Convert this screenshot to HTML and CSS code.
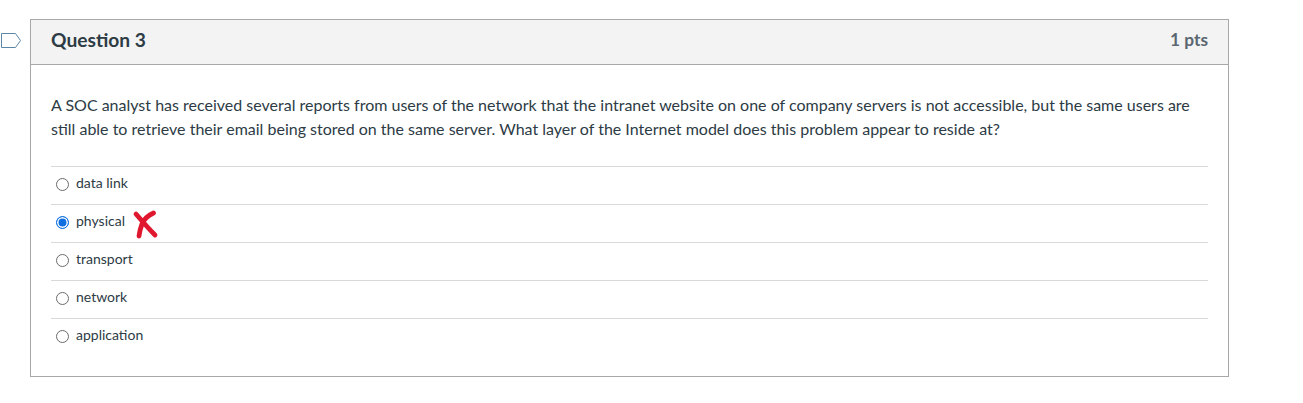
FILE: index.html
```
<!DOCTYPE html>
<html lang="en">
<head>
<meta charset="utf-8">
<title>Question 3</title>
<link rel="stylesheet" href="styles.css">
</head>
<body>
<div class="page">
  <svg class="flag" width="22" height="17" viewBox="0 0 22 17"><path d="M1.5 1.5H15.5L20.5 8.5L15.5 15.5H1.5Z" fill="#fff" stroke="#5b86a6" stroke-width="1"/></svg>
  <section class="card">
    <header class="head">
      <h2 class="title">Question 3</h2>
      <span class="pts">1 pts</span>
    </header>
    <div class="body">
      <p class="text">A SOC analyst has received several reports from users of the network that the intranet website on one of company servers is not accessible, but the same users are still able to retrieve their email being stored on the same server. What layer of the Internet model does this problem appear to reside at?</p>
      <ul class="answers">
        <li class="answer"><span class="radio"></span><span>data link</span></li>
        <li class="answer"><span class="radio checked"></span><span>physical</span>
          <svg class="mark" width="28" height="30" viewBox="0 0 28 30"><path d="M4 5C10 12 17 20 23 26M21.5 4C17 6 12 10 10 15C8.5 19 7.5 23 7 27" fill="none" stroke="#e0182f" stroke-width="4.8" stroke-linecap="round" stroke-linejoin="round"/></svg>
        </li>
        <li class="answer"><span class="radio"></span><span>transport</span></li>
        <li class="answer"><span class="radio"></span><span>network</span></li>
        <li class="answer"><span class="radio"></span><span>application</span></li>
      </ul>
    </div>
  </section>
</div>
</body>
</html>
```
FILE: styles.css
```
* { box-sizing: border-box; }
html, body { margin: 0; padding: 0; background: #fff; }
body { font-family: Lato, "Liberation Sans", sans-serif; color: #2d3b45; height: 403px; overflow: hidden; }
.page { position: relative; padding: 19px 0 0 30px; }
.flag { position: absolute; left: 0; top: 32px; }
.card { width: 1199px; height: 358px; border: 1px solid #a8a8a8; }
.head { height: 45px; display: flex; justify-content: space-between; align-items: center; padding: 0 20px 6px; background: #f3f3f3; border-bottom: 1px solid #a8a8a8; }
.title { margin: 0; font-size: 19.2px; font-weight: 700; color: #2d3b45; }
.pts { font-size: 17.3px; font-weight: 700; color: #5a6670; }
.body { padding: 28px 20px 0; }
.text { margin: 0 0 25px; font-size: 16px; line-height: 24px; }
.answers { list-style: none; margin: 0; padding: 0; }
.answer { height: 38px; display: flex; align-items: center; gap: 7px; padding: 0 0 7px 5px; border-top: 1px solid #d9d9d9; font-size: 14px; position: relative; }
.radio { width: 13px; height: 13px; margin-top: 4px; border-radius: 50%; border: 1px solid #6b6b6b; background: #fff; flex: none; }
.radio.checked { border: 1.5px solid #0f6fe0; background: #0f6fe0; box-shadow: inset 0 0 0 1.5px #fff; }
.mark { position: absolute; left: 81px; top: 4px; }
```
